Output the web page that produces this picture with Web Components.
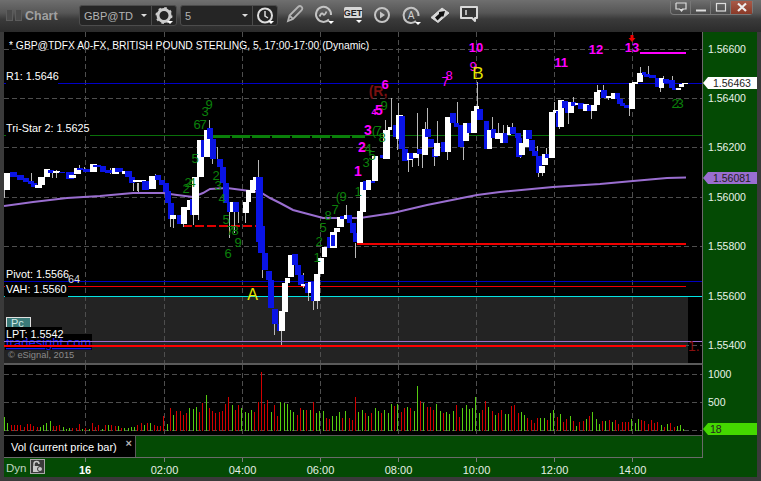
<!DOCTYPE html>
<html>
<head>
<meta charset="utf-8">
<style>
  html, body { margin: 0; padding: 0; background: #3a3a3a; overflow: hidden; }
  body { font-family: "Liberation Sans", Arial, sans-serif; }
</style>
</head>
<body>
<chart-window>
  <chart-titlebar slot="title"></chart-titlebar>
  <price-pane slot="panes"></price-pane>
  <volume-pane slot="panes"></volume-pane>
  <legend-row slot="panes">Vol (current price bar)</legend-row>
  <time-axis slot="panes"></time-axis>
  <value-axis slot="axis"></value-axis>
</chart-window>

<script>
const SVG_FONT = 'font-family="Liberation Sans, Arial, sans-serif"';
const GRID_X = [85, 164, 242, 320, 398, 476, 554, 632];
const GRID_Y = [49, 98, 147, 197, 246, 296, 345];

// helpers for the svg strings
function box(x, y, w, h, fill) {
  return `<rect x="${x}" y="${y}" width="${w}" height="${h}" fill="${fill}" shape-rendering="crispEdges"/>`;
}
function label(text, x, y, size, fill, opts = {}) {
  const weight = opts.bold ? 'bold' : 'normal';
  const anchor = opts.anchor || 'start';
  return `<text x="${x}" y="${y}" font-size="${size}" fill="${fill}" font-weight="${weight}" text-anchor="${anchor}" ${SVG_FONT}>${text}</text>`;
}
function gridLines(x1, x2, y1, y2, ys) {
  let out = '';
  for (const x of GRID_X) {
    out += `<line x1="${x + 0.5}" x2="${x + 0.5}" y1="${y1}" y2="${y2}" stroke="#4e4e4e" stroke-dasharray="5 3" shape-rendering="crispEdges"/>`;
  }
  for (const y of ys) {
    out += `<line x1="${x1}" x2="${x2}" y1="${y + 0.5}" y2="${y + 0.5}" stroke="#4e4e4e" stroke-dasharray="5 3" shape-rendering="crispEdges"/>`;
  }
  return out;
}

// W/B x1-x2:top-bottom
const CANDLES = `
W4-9:173-190 B10-16:172-177 B17-23:175-180 B23-28:178-182 B28-33:181-184 B31-36:183-187 W35-41:185-188 W38-44:177-185
W44-49:169-177 B48-53:170-173 W53-59:171-173 B59-64:172-173 B66-73:172-179 W69-75:175-178 W74-80:168-174 B77-82:168-170
B83-90:169-172 W90-96:164-172 B93-100:165-167 B100-105:166-172 B105-112:170-173 W112-118:168-174 B115-122:168-172 W122-125:171-174
B125-131:171-177 B129-134:177-183 W133-138:180-182 W138-145:180-182 B142-148:181-190 W149-155:176-189 B155-160:175-180 B159-164:180-185
B163-168:183-192 B165-170:191-203 B168-173:203-219 W170-175:215-219 B177-182:215-224 W181-186:207-224 W187-193:200-210 B190-194:199-215
W192-198:177-215 W197-203:140-177 B201-205:140-157 W204-210:130-157 B207-212:128-139 B210-215:139-159 B217-222:159-167 B220-225:167-183
B223-228:183-203 B227-232:202-212 W230-236:202-212 B233-238:202-212 W243-248:202-213 W246-250:190-202 W250-254:180-193 W253-258:177-190
B256-262:177-242 B258-264:226-253 B262-267:253-270 B266-271:271-280 B268-273:280-308 B272-277:309-324 B277-280:324-331 W279-284:311-331
W282-287:283-312 W285-289:278-283 W288-293:255-277 B292-297:254-265 B295-300:265-275 B298-303:275-285 W301-305:284-286 B305-310:283-293
W308-311:282-293 B311-316:282-301 W314-319:274-301 W318-323:258-274 W322-326:247-257 B327-331:237-248 W330-336:232-248 B331-334:235-246
W334-339:228-232 W337-343:217-227 B340-345:216-219 W344-348:215-219 B347-351:215-223 B350-355:223-233 B353-358:233-242 W357-362:211-243
W360-365:182-212 B363-366:181-190 W366-370:180-190 B371-374:181-183 W372-377:156-181 B380-383:155-158 W383-389:130-159 W388-391:127-130
B393-397:125-137 W396-402:115-139 B399-404:116-149 B402-407:149-161 W407-412:153-160 B409-413:153-159 W413-418:153-158 B417-422:149-154
W422-427:129-155 B425-430:129-137 B428-433:139-147 B432-437:149-157 W434-439:143-156 B441-445:142-152 W445-450:117-152 B450-455:113-123
B454-458:123-127 B458-463:125-147 W463-468:123-141 B467-471:123-133 W471-476:111-133 W474-478:106-111 B477-482:109-120 B484-488:121-149
W487-491:130-149 B491-495:129-138 W495-500:133-139 W500-505:133-143 B503-507:133-143 W507-510:127-135 B510-515:127-134 B515-520:133-138
B516-521:138-157 W519-524:143-155 W523-528:130-147 B526-531:130-139 B529-534:140-151 B532-537:151-156 B536-541:156-173 W539-544:166-173
W542-547:154-165 B545-549:154-158 W549-554:112-158 W553-557:110-113 B556-561:111-127 W558-563:100-127 B562-567:101-108 B565-569:107-113
W568-573:102-113 B571-575:102-106 W575-578:103-105 B578-583:103-109 W583-588:104-111 B587-592:105-111 W591-596:105-111 W594-599:92-105
W597-601:90-92 B601-606:90-98 W606-610:96-98 W611-615:93-99 B615-619:93-99 B617-622:99-104 B620-624:103-106 B624-629:105-108
W629-634:83-109 W632-637:82-84 W637-642:73-82 B642-645:72-75 B644-649:74-77 B649-655:75-78 B655-658:78-87 W659-663:78-88 B663-668:79-83
B669-674:80-88 B672-677:88-90 W676-680:88-90 W679-683:84-87 W682-687:83-84`;

// x:top-bottom, drawn under the bodies
const WICKS = `
4:190-198 31:173-181 52:173-178 56:170-178 79:165-169 84:167-169 110:168-174 133:183-191 137:183-191 138:183-192 155:174-176
170:219-227 173:219-228 183:224-227 193:215-225 198:215-220 209:120-128 203:157-163 212:159-164 217:147-159 229:212-238 234:212-233
238:212-223 245:213-223 258:160-177 262:253-278 274:324-335 281:331-346 303:273-288 308:293-301 313:301-310 317:301-309 346:205-215
355:243-258 385:120-130 391:98-127 398:103-115 397:139-150 408:160-172 412:159-167 417:113-150 418:158-166 422:155-168 425:122-129
427:108-129 434:157-166 437:121-143 447:152-160 457:102-123 463:147-160 477:82-106 492:117-129 498:123-133 503:125-133 507:125-127
512:123-127 520:155-158 537:146-156 538:173-177 542:173-176 546:148-155 554:102-112 559:127-129 568:113-124 573:97-102 591:111-119
597:85-90 603:85-90 608:98-100 629:109-116 640:67-73 648:66-75 660:88-92 663:76-79 672:76-80`;

const PURPLE = '4,206 33,202 67,198 100,196 133,193 163,193 177,195 193,197 203,193 210,189 227,188 250,191 260,192 270,198 280,203 293,210 323,218 360,218 393,213 427,205 477,195 500,192 553,187 600,184 633,181 667,178 686,177.5';

// [text, x, baseline, size, colour, bold]
const MAGENTA = '#ff00ff';
const GREEN = '#0b800b';
const MARKS = [
  ['9', 209, 109, 13, GREEN], ['3', 205, 116, 13, GREEN], ['6', 197, 129, 13, GREEN], ['7', 203, 129, 13, GREEN],
  ['5', 195, 163, 13, GREEN], ['2', 216, 180, 13, GREEN], ['3', 218, 190, 13, GREEN], ['4', 222, 203, 13, GREEN],
  ['2', 188, 187, 13, GREEN], ['4', 192, 187, 13, GREEN], ['2', 186, 193, 13, GREEN], ['5', 226, 224, 13, GREEN],
  ['7', 230, 235, 13, GREEN], ['8', 235, 235, 13, GREEN], ['9', 238, 247, 13, GREEN], ['6', 228, 258, 13, GREEN],
  ['9', 343, 201, 13, GREEN], ['(', 338, 201, 13, GREEN], ['7', 335, 214, 13, GREEN], ['8', 328, 220, 13, GREEN],
  ['5', 323, 232, 13, GREEN], ['2', 319, 246, 13, GREEN], ['1', 317, 262, 13, GREEN], ['1', 358, 196, 13, GREEN],
  ['9', 384, 110, 13, GREEN], ['7', 378, 135, 13, GREEN], ['(', 374, 135, 13, GREEN], ['8', 382, 142, 13, GREEN],
  ['4', 368, 153, 13, GREEN], ['5', 372, 160, 13, GREEN], ['3', 366, 167, 13, GREEN], ['2', 675, 108, 13, GREEN],
  ['3', 680, 108, 13, GREEN],
  ['(R,', 378, 96, 14, '#7a1010', true],
  ['10', 476, 52, 13, MAGENTA, true], ['11', 561, 67, 13, MAGENTA, true], ['12', 596, 54, 13, MAGENTA, true],
  ['13', 632, 52, 13, MAGENTA, true], ['9', 473, 71, 13, MAGENTA], ['8', 449, 80, 13, MAGENTA], ['7', 445, 86, 13, MAGENTA],
  ['6', 385, 89, 13, MAGENTA, true], ['4', 374, 115, 9, MAGENTA, true], ['5', 379, 115, 14, MAGENTA, true],
  ['3', 368, 135, 14, MAGENTA, true], ['2', 362, 152, 14, MAGENTA, true], ['1', 358, 176, 14, MAGENTA, true],
  ['B', 478, 79, 17, '#e6e600'], ['A', 252.5, 300, 16, '#e6e600'],
];

const VOLUME = ('g13 g7 r5 r5 r5 r5 r3 r6 r6 r4 r3 g3 g5 g7 g9 r4 r4 r5 g3 g1 g2 r2 r2 r6 g1 r2 g1 r7 r3 r5 g1 r5 g5 r5 r4 g4 r2 g2 g2 g3 g3 r5 r7 g5 r7 g7 r5 r4 r4 '
  + 'r14 g6 r22 g15 r19 r19 r15 r17 g22 g21 g23 r18 r27 g35 r22 r19 r17 r18 r19 r26 r33 g25 r20 r25 g22 g18 g17 g20 r18 r28 r58 r26 r30 g18 r25 r14 g28 g27 g26 g20 g18 r15 r22 g20 r20 g20 r28 g17 g19 g19 r12 r11 g14 g14 g18 r12 g19 r12 r10 r33 g18 g20 r17 g14 r17 g22 g19 '
  + 'r17 g20 g17 g26 r24 g26 r18 r22 g23 r22 g19 g44 r29 g27 r23 r23 r20 g26 g19 r17 g18 g16 g19 r25 r13 g22 g25 g21 g22 g33 g17 r20 r29 g23 r19 g15 r17 r20 g16 g16 r24 r25 r17 g18 g15 r12 r10 r7 r12 g12 g12 r10 g17 g20 r13 g16 r8 r11 g14 r9 g4 r8 r9 g11 r14 g18 g11 g6 r9 g9 r10 g8 r10 r6 r8 r8 r8 g11 g7 g11 r10 r9 r6 r10 r7 r8 g5 r3 g6 r7 r3 g4 g5 g1').split(' ');

class ChartWindow extends HTMLElement {
  constructor() {
    super();
    this.attachShadow({ mode: 'open' });
    this.shadowRoot.innerHTML = `
      <style>
        :host {
          display: flex;
          flex-direction: column;
          width: 761px;
          height: 481px;
          background: #3a3a3a;
          color: #fff;
          font-family: "Liberation Sans", Arial, sans-serif;
        }
        .body {
          display: flex;
          padding: 0 4px 4px 4px;
          height: 445px;
        }
        .panes {
          display: flex;
          flex-direction: column;
          width: 699px;
        }
      </style>
      <slot name="title"></slot>
      <div class="body">
        <div class="panes"><slot name="panes"></slot></div>
        <slot name="axis"></slot>
      </div>`;
  }
}

class ChartTitlebar extends HTMLElement {
  constructor() {
    super();
    this.attachShadow({ mode: 'open' });
    const arrow = (x, y) => `<path d="M${x} ${y}h6l-3 3z" fill="#fff"/>`;
    const icons = [
      `<path d="M5 19l1.5-5.5L15 5c1.2-1.2 2.6-1.2 3.6-.2s1 2.4-.2 3.6L10 17z M6.5 13.5l3.5 3.5" fill="none" stroke="#b4b4b4" stroke-width="1.8"/>`,
      `<path d="M17 17.5A7.5 7.5 0 1 1 19 13" fill="none" stroke="#c4c4c4" stroke-width="2"/><path d="M7.5 14.5c1.5-3 2.5-4 3.5-2.5s2 1 3.5-2.5" fill="none" stroke="#c4c4c4" stroke-width="1.8"/>${arrow(16, 19)}`,
      `<rect x="3" y="5" width="18" height="11" rx="1.5" fill="#d6d6d6"/><text x="12" y="14" font-size="9" font-weight="bold" text-anchor="middle" fill="#222" ${SVG_FONT}>GET</text>${arrow(15, 18)}`,
      `<circle cx="12" cy="13" r="7" fill="none" stroke="#c4c4c4" stroke-width="2"/><path d="M10 9.5l5 3.5-5 3.5z" fill="#c4c4c4"/>`,
      `<path d="M17 19A7.5 7.5 0 1 1 19.5 14" fill="none" stroke="#c4c4c4" stroke-width="2"/><text x="12" y="16.5" font-size="10" text-anchor="middle" fill="#d0d0d0" ${SVG_FONT}>A</text>${arrow(16, 20)}`,
      `<path d="M3 15.5L14 6l7 5-11 9.5z" fill="#d8d8d8" stroke="#d8d8d8" stroke-width="1" stroke-linejoin="round"/><path d="M7 15.5l4-3.5v-2l6-1-1.5 5.5h-2l-4 4z" fill="#111"/>`,
      `<path d="M4 5h16v11h-2v3l-3-3H4z" fill="#333" stroke="#d8d8d8" stroke-width="2" stroke-linejoin="round"/><path d="M9 8v5" stroke="#e0e0e0" stroke-width="1.5"/>`,
    ];
    this.shadowRoot.innerHTML = `
      <style>
        :host {
          display: flex;
          height: 32px;
          padding-left: 6px;
          box-sizing: border-box;
          background: linear-gradient(#6f6f6f, #565656 40%, #3a3a3a 60%, #2b2b2b);
        }
        .grip { display: flex; gap: 2px; margin-top: 9px; height: 12px; }
        .grip i { width: 5px; border: 1px solid #5c5c5c; background: #4a4a4a; }
        .name {
          margin: 9px 0 0 3px;
          width: 54px;
          font-size: 12.5px;
          font-weight: bold;
          color: #a0a0a0;
        }
        .combo {
          display: flex;
          align-items: center;
          width: 98px;
          height: 21px;
          margin: 5px 3px 0 0;
          box-sizing: border-box;
          border: 1px solid #4c4c4c;
          border-radius: 3px;
          background: #252525;
          color: #b4b4b4;
          font-size: 11px;
        }
        .combo .text { flex: 1; padding-left: 4px; white-space: nowrap; overflow: hidden; }
        .combo .caret { margin-right: 4px; border: 3px solid transparent; border-top: 3px solid #ddd; border-bottom: 0; }
        .combo .cell { width: 25px; height: 19px; border-left: 1px solid #4c4c4c; box-sizing: border-box; }
        .tools { display: flex; gap: 5px; margin-left: 2px; margin-top: 2px; }
        svg { display: block; }
        .wincontrols {
          display: flex;
          margin: 1px 8px 0 auto;
          height: 13px;
          border: 1px solid #7a7a7a;
          border-top: 0;
          border-radius: 0 0 4px 4px;
          background: linear-gradient(#6c6c6c, #4a4a4a);
        }
        .wincontrols div { width: 19px; display: flex; align-items: center; justify-content: center; border-left: 1px solid #777; }
        .wincontrols div:first-child { border-left: 0; }
        .wincontrols .close { width: 21px; background: linear-gradient(#a85a48, #8a3a28); }
      </style>
      <div class="grip"><i></i><i></i></div>
      <div class="name">Chart</div>
      <div class="combo">
        <span class="text">GBP@TD</span><span class="caret"></span>
        <div class="cell"><svg width="24" height="19" viewBox="0 0 24 19">
          <circle cx="12" cy="9.5" r="6" fill="none" stroke="#ccc" stroke-width="3"/>
          <circle cx="12" cy="9.5" r="7.5" fill="none" stroke="#ccc" stroke-width="2" stroke-dasharray="2.5 3.4"/>
          ${arrow(15, 15)}
        </svg></div>
      </div>
      <div class="combo">
        <span class="text">5</span><span class="caret"></span>
        <div class="cell"><svg width="24" height="19" viewBox="0 0 24 19">
          <circle cx="12" cy="9.5" r="7" fill="none" stroke="#ddd" stroke-width="2"/>
          <path d="M12 5v5l3 2" fill="none" stroke="#ddd" stroke-width="1.5"/>
          ${arrow(15, 15)}
        </svg></div>
      </div>
      <div class="tools">
        ${icons.map(i => `<svg width="24" height="24" viewBox="0 0 24 24">${i}</svg>`).join('')}
      </div>
      <div class="wincontrols">
        <div><svg width="14" height="11" viewBox="0 0 14 11"><path d="M2 1h10v6H8M6 7H2V1" fill="none" stroke="#ddd" stroke-width="1.2"/><path d="M5 7h5l-2.5 3z" fill="#ddd"/></svg></div>
        <div><svg width="12" height="11" viewBox="0 0 12 11"><path d="M1 8.5h10" stroke="#ddd" stroke-width="2"/></svg></div>
        <div><svg width="12" height="11" viewBox="0 0 12 11"><rect x="1.5" y="1.5" width="9" height="7.5" fill="none" stroke="#ddd" stroke-width="1.2"/></svg></div>
        <div class="close"><svg width="12" height="11" viewBox="0 0 12 11"><path d="M2 1.5l8 7.5M10 1.5L2 9" stroke="#eee" stroke-width="2.2"/></svg></div>
      </div>`;
  }
}

class PricePane extends HTMLElement {
  constructor() {
    super();
    this.attachShadow({ mode: 'open' });
    this.shadowRoot.innerHTML = `
      <style>
        :host {
          display: block;
          height: 331px;
          background: #000;
          border-right: 1px solid #6a6a6a;
          border-bottom: 2px solid #5a5a5a;
        }
        svg { display: block; }
      </style>
      <svg width="698" height="331" viewBox="4 32 698 331">${this.plot()}</svg>`;
  }

  plot() {
    let s = box(4, 296, 684, 67, '#232323');
    s += gridLines(4, 702, 32, 363, GRID_Y);

    // level lines
    s += box(4, 83, 698, 1, '#0000c8');
    s += box(4, 135, 698, 1, '#0a700a');
    s += box(4, 281, 698, 1, '#0000c0');
    s += box(4, 286, 682, 1, '#f00000');
    s += box(4, 296, 698, 1, '#00e4e4');
    s += `<line x1="212" x2="365" y1="136.5" y2="136.5" stroke="#0a800a" stroke-width="3" stroke-dasharray="18 2" shape-rendering="crispEdges"/>`;
    s += `<line x1="183" x2="256" y1="226" y2="226" stroke="#e00000" stroke-width="2" stroke-dasharray="9 3" shape-rendering="crispEdges"/>`;
    s += box(357, 243, 329, 2, '#f00000');
    s += box(640, 52, 46, 2, MAGENTA);

    s += `<polyline points="${PURPLE}" fill="none" stroke="#9a6ed0" stroke-width="2"/>`;

    // candles
    for (const w of WICKS.trim().split(/\s+/)) {
      const m = w.match(/(\d+):(\d+)-(\d+)/);
      s += box(+m[1], +m[2], 1, m[3] - m[2], '#b8b8b8');
    }
    for (const c of CANDLES.trim().split(/\s+/)) {
      const m = c.match(/([WB])(\d+)-(\d+):(\d+)-(\d+)/);
      s += box(+m[2], +m[4], m[3] - m[2] + 1, m[5] - m[4], m[1] === 'W' ? '#ffffff' : '#0a14e6');
    }

    // wave counts
    for (const [text, x, y, size, fill, bold] of MARKS) {
      s += label(text, x, y, size, fill, { bold, anchor: 'middle' });
    }
    s += `<path d="M630.5 35h3v3h2l-3.5 4-3.5-4h2z" fill="#f00000"/>`;

    // study labels sit on black plates over the lines
    s += label('* GBP@TDFX A0-FX, BRITISH POUND STERLING, 5, 17:00-17:00 (Dynamic)', 9, 48.5, 10.3, '#fff');
    s += box(6, 70, 52, 14, '#000') + label('R1: 1.5646', 6, 80, 10.8, '#fff');
    s += box(6, 122, 84, 14, '#000') + label('Tri-Star 2: 1.5625', 6, 132, 10.8, '#fff');
    s += label('64', 68, 283, 10.8, '#dcdcdc');
    s += box(5, 268, 63, 12, '#000') + label('Pivot: 1.5566', 6, 278, 10.8, '#fff');
    s += box(5, 283, 63, 14, '#000') + label('VAH: 1.5560', 6, 293, 10.8, '#fff');
    s += box(6, 317, 25, 12, '#e0e0e0') + box(7, 318, 23, 10, '#3b7a78') + label('Pc', 11, 327, 11, '#cfe8e6');
    s += box(5, 334, 87, 16, '#000');
    s += `<text x="6" y="347" font-size="13" fill="#1818ff" text-decoration="underline" ${SVG_FONT}>tradesight.com</text>`;
    s += box(5, 327, 57, 11, '#000') + label('LPT: 1.5542', 6, 338, 10.8, '#fff');
    s += box(4, 341, 698, 1, '#9a6ed0');
    s += box(4, 345, 682, 2, '#ff0000');
    s += label('&#169; eSignal, 2015', 8, 358, 9.3, '#8a8a8a');
    s += label('1.', 688, 351, 14, '#8a1010');
    return s;
  }
}

class VolumePane extends HTMLElement {
  constructor() {
    super();
    this.attachShadow({ mode: 'open' });
    let s = gridLines(4, 702, 365, 435, [374, 402, 430]);
    VOLUME.forEach((v, i) => {
      const h = +v.slice(1);
      const x = Math.round(4 + i * 3.25);
      s += box(x, 430 - h, 1, h + 1, v[0] === 'g' ? '#55cc10' : '#d20000');
    });
    this.shadowRoot.innerHTML = `
      <style>
        :host { display: block; height: 70px; background: #000; border-right: 1px solid #6a6a6a; }
        svg { display: block; }
      </style>
      <svg width="698" height="70" viewBox="4 365 698 70">${s}</svg>`;
  }
}

class LegendRow extends HTMLElement {
  constructor() {
    super();
    this.attachShadow({ mode: 'open' });
    this.shadowRoot.innerHTML = `
      <style>
        :host {
          display: flex;
          height: 23px;
          box-sizing: border-box;
          background: #044a04;
          border-top: 1px solid #5a5a5a;
          border-right: 1px solid #6a6a6a;
          border-bottom: 1px solid #6a6a6a;
        }
        .tab {
          position: relative;
          display: flex;
          align-items: center;
          box-sizing: border-box;
          width: 132px;
          padding-left: 7px;
          background: #000;
          color: #fff;
          font-size: 11px;
          border-right: 1px solid #5a5a5a;
        }
        .close {
          position: absolute;
          right: 3px;
          top: 2px;
          font-size: 11px;
          font-weight: bold;
          line-height: 10px;
          color: #b4b4b4;
        }
      </style>
      <div class="tab"><slot></slot><span class="close">&#215;</span></div>`;
  }
}

class TimeAxis extends HTMLElement {
  constructor() {
    super();
    this.attachShadow({ mode: 'open' });
    const times = ['02:00', '04:00', '06:00', '08:00', '10:00', '12:00', '14:00'];
    let s = '';
    for (const x of GRID_X) s += box(x, 457, 1, 4, '#7a7a7a');
    s += label('16', 85, 472.5, 11, '#fff', { bold: true, anchor: 'middle' });
    times.forEach((t, i) => { s += label(t, GRID_X[i + 1] + 0.5, 472.5, 11, '#e4f0e4', { anchor: 'middle' }); });
    this.shadowRoot.innerHTML = `
      <style>
        :host { display: flex; height: 19px; background: #044a04; }
        .dyn { width: 46px; display: flex; gap: 4px; align-items: flex-start; padding-left: 2px; box-sizing: border-box; }
        .dyn span { font-size: 11.5px; color: #c0d4c0; margin-top: 4px; }
        .lock {
          width: 15px;
          height: 15px;
          margin-top: 1px;
          box-sizing: border-box;
          border: 1px solid #a8a8a8;
          background: #3a3a3a;
        }
        svg { display: block; }
      </style>
      <div class="dyn">
        <span>Dyn</span>
        <div class="lock"><svg width="13" height="13" viewBox="0 0 13 13">
          <path d="M3 6V4a2.5 2.5 0 0 1 5 0" fill="none" stroke="#c8c8c8" stroke-width="1.5"/>
          <rect x="2" y="6" width="7" height="6" fill="#c8c8c8"/><circle cx="9" cy="9" r="2.5" fill="#c8c8c8" stroke="#333"/>
        </svg></div>
      </div>
      <svg width="652" height="20" viewBox="50 457 652 20">${s}</svg>`;
  }
}

class ValueAxis extends HTMLElement {
  constructor() {
    super();
    this.attachShadow({ mode: 'open' });
    const prices = ['1.56600', '1.56400', '1.56200', '1.56000', '1.55800', '1.55600', '1.55400'];
    const tag = (y, fill) => `<path d="M703 ${y + 6}l5-6h49v12h-49z" fill="${fill}"/>`;
    let s = '';
    prices.forEach((p, i) => { s += label(p, 708, GRID_Y[i] + 4, 10.5, '#e8f4e8'); });
    s += tag(77, '#fff') + label('1.56463', 713, 87, 10.5, '#222');
    s += tag(172, '#9a6ed0') + label('1.56081', 713, 182, 10.5, '#222');
    s += label('1000', 708, 378, 10.5, '#e8f4e8') + label('500', 708, 406, 10.5, '#e8f4e8');
    s += tag(423, '#44d800') + label('18', 710, 433, 10.5, '#222');
    this.shadowRoot.innerHTML = `
      <style>
        :host { display: block; width: 54px; background: #044a04; }
        svg { display: block; }
      </style>
      <svg width="54" height="445" viewBox="703 32 54 445">${s}</svg>`;
  }
}

customElements.define('chart-window', ChartWindow);
customElements.define('chart-titlebar', ChartTitlebar);
customElements.define('price-pane', PricePane);
customElements.define('volume-pane', VolumePane);
customElements.define('legend-row', LegendRow);
customElements.define('time-axis', TimeAxis);
customElements.define('value-axis', ValueAxis);
</script>
</body>
</html>
